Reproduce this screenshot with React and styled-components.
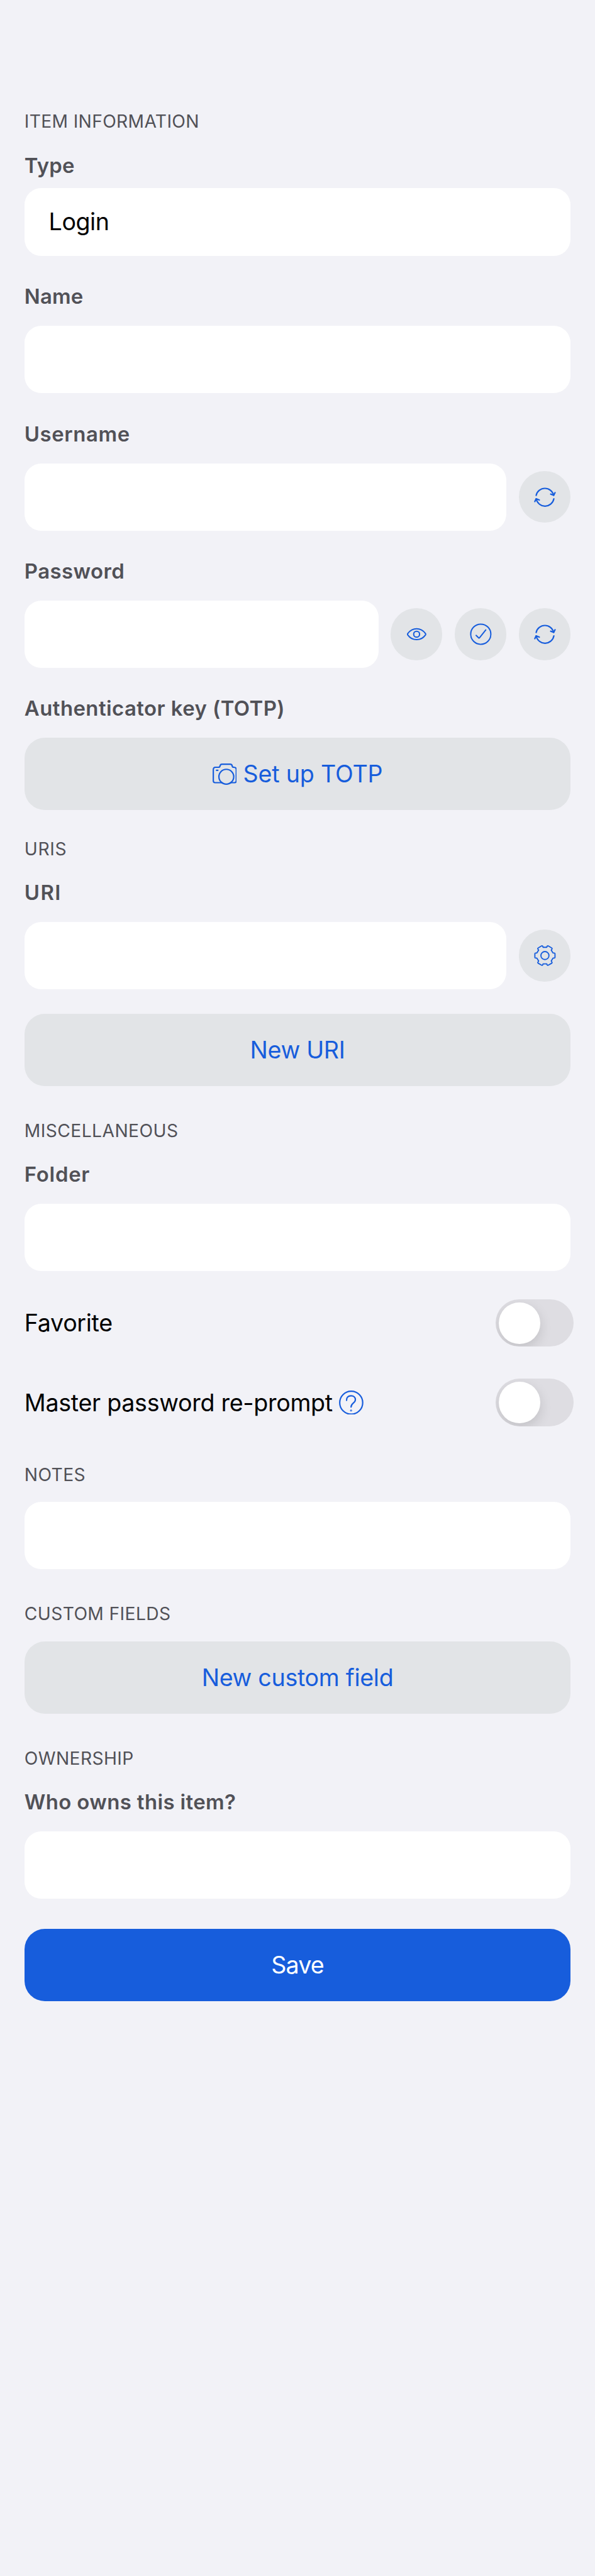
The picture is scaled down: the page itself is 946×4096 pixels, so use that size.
import React from "react";
import styled, { createGlobalStyle } from "styled-components";

const k = 946 / 1170;
const kv = 4096 / 5064;
// u scales widths and type, v scales vertical measures
const u = (n) => `${(n * k).toFixed(3)}px`;
const v = (n) => `${(n * kv).toFixed(3)}px`;

const Global = createGlobalStyle`
  body { margin: 0; background: #f2f2f7; font-family: Inter, "Liberation Sans", sans-serif; }
`;

const Page = styled.main`
  box-sizing: border-box;
  width: 100%;
  height: 4096px;
  padding: ${v(215.3)} ${u(48)} 0;
  display: flex;
  flex-direction: column;
`;

const Section = styled.section`
  display: flex;
  flex-direction: column;
  margin-top: ${(p) => v(p.$top ?? 0)};
`;

const SectionTitle = styled.h2`
  margin: 0;
  height: ${v(48)};
  line-height: ${v(48)};
  font-size: ${u(34.9)};
  font-weight: 400;
  letter-spacing: ${(p) => u(p.$track ?? 0.48)};
  color: #515157;
  white-space: nowrap;
`;

const Label = styled.label`
  display: block;
  height: ${v(60)};
  line-height: ${v(60)};
  margin-top: ${(p) => v(p.$top ?? 50)};
  margin-bottom: ${(p) => v(p.$bottom ?? 28)};
  font-size: ${u(40.7)};
  font-weight: 600;
  letter-spacing: ${(p) => u(p.$track ?? 0.55)};
  color: #515157;
  white-space: nowrap;
`;

const Row = styled.div`
  display: flex;
  align-items: center;
  gap: ${u(24)};
`;

const Field = styled.div`
  box-sizing: border-box;
  flex: 1 0 auto;
  height: ${(p) => v(p.$height ?? 132)};
  margin-top: ${(p) => v(p.$top ?? 0)};
  padding: 0 ${u(48)};
  border-radius: ${u(33)};
  background: #fff;
  color: #000;
  font-size: ${u(46.5)};
  line-height: ${(p) => v((p.$height ?? 132) + 1)};
  letter-spacing: ${u(-0.57)};
`;

const IconButton = styled.button`
  flex: none;
  display: flex;
  align-items: center;
  justify-content: center;
  width: ${u(102)};
  height: ${u(102)};
  padding: 0;
  border: 0;
  border-radius: 50%;
  background: #e2e4e7;
`;

const WideButton = styled.button`
  display: flex;
  align-items: center;
  justify-content: center;
  gap: ${u(12.5)};
  width: 100%;
  height: ${v(142)};
  margin-top: ${(p) => v(p.$top ?? 0)};
  padding: 0;
  border: 0;
  border-radius: ${u(40)};
  background: ${(p) => (p.$primary ? "#175ddc" : "#e2e4e7")};
  color: ${(p) => (p.$primary ? "#fff" : "#175ddc")};
  font-family: inherit;
  font-size: ${u(46.5)};
  letter-spacing: ${(p) => u(p.$track ?? -0.36)};
`;

const ToggleRow = styled.div`
  display: flex;
  align-items: center;
  height: ${v(93)};
  margin: ${(p) => v(p.$top)} ${u(-6)} 0 0;
`;

const ToggleText = styled.span`
  font-size: ${u(46.5)};
  letter-spacing: ${(p) => u(p.$track ?? -0.36)};
  margin-right: ${u(13)};
  white-space: nowrap;
`;

const Track = styled.span`
  box-sizing: border-box;
  overflow: hidden;
  width: ${u(153)};
  height: ${u(93)};
  margin-left: auto;
  padding: ${u(6)};
  border-radius: ${u(47)};
  background: #dedde2;
`;

const Knob = styled.span`
  display: block;
  width: ${u(81)};
  height: ${u(81)};
  border-radius: 50%;
  background: #fff;
  box-shadow: 0 ${u(9)} ${u(24)} rgba(0, 0, 0, 0.13);
`;

const Icon = styled.svg.attrs((p) => ({
  viewBox: `0 0 ${p.$w} ${p.$h}`,
  fill: "none",
  stroke: "#175ddc",
  strokeWidth: p.$stroke ?? 2.5,
  strokeLinecap: "round",
  strokeLinejoin: "round",
}))`
  flex: none;
  width: ${(p) => u(p.$w)};
  height: ${(p) => u(p.$h)};
`;

const Refresh = () => (
  <Icon $w={48} $h={48} $stroke={2.7}>
    <path d="M6.7 20.6A17.7 17.7 0 0 1 41.2 20.4M41.6 27.3A17.7 17.7 0 0 1 6.8 27.4" />
    <path d="M35.3 18.1 41.3 20.5 43.9 15.2M4.1 32.8 6.7 27.3 12.9 29.7" />
  </Icon>
);

const Eye = () => (
  <Icon $w={48} $h={48}>
    <path d="M6.8 22.3C16 10.2 32 10.2 41.2 22.3Q42.5 24 41.2 25.7C32 37.8 16 37.8 6.8 25.7Q5.5 24 6.8 22.3Z" />
    <circle cx="24" cy="24" r="5.8" />
  </Icon>
);

const Check = () => (
  <Icon $w={48} $h={48}>
    <circle cx="24" cy="24" r="19.8" />
    <path d="M14.8 26.4 19.8 31.3Q20.7 32.1 21.5 31.1L33.8 15.7" />
  </Icon>
);

const Gear = () => (
  <Icon $w={48} $h={48} $stroke={2.3}>
    <circle cx="24" cy="24" r="7.9" />
    <path d="M20.4 7.7Q19.6 4.1 17.6 5L11.3 8.6Q9.2 9.7 10.3 11.3L11.6 13.3 8.1 19H5.7Q4.2 19 4.2 20.5V27.5Q4.2 29 5.7 29H8.1L11.6 34.7 10.3 36.7Q9.2 38.3 11.3 39.4L17.6 43Q19.6 43.9 20.4 40.3H27.6Q28.4 43.9 30.4 43L36.7 39.4Q38.8 38.3 37.7 36.7L36.4 34.7 39.9 29H42.3Q43.8 29 43.8 27.5V20.5Q43.8 19 42.3 19H39.9L36.4 13.3 37.7 11.3Q38.8 9.7 36.7 8.6L30.4 5Q28.4 4.1 27.6 7.7Z" />
  </Icon>
);

const Camera = () => (
  <Icon $w={48} $h={42} $stroke={2.7}>
    <path d="M18.3 37.7H5Q1.4 37.7 1.4 34V12Q1.4 7.4 5.8 7.4H11Q14.3 7.4 14.6 5Q15 1.4 18.6 1.4H34.6Q38.2 1.4 38.6 5Q38.8 7.4 42 7.4Q46.6 7.4 46.6 12V34Q46.6 37.7 43 37.7H35.7" />
    <circle cx="27" cy="26" r="14.6" />
    <path d="M7.6 13.4H10.4" />
  </Icon>
);

const Question = () => (
  <Icon $w={48} $h={48} $stroke={2.7}>
    <circle cx="24" cy="24" r="22.6" />
    <path d="M14.9 19.3C14.4 13.5 18.2 10.3 23.6 10.3C28.8 10.3 32.2 13.6 32.2 18C32.2 25.2 23.7 24.2 23.7 32.6" />
    <circle cx="23.7" cy="39.3" r="0.6" />
  </Icon>
);

export default function App() {
  return (
    <>
      <Global />
      <Page>
        <Section>
          <SectionTitle $track={0.43}>ITEM INFORMATION</SectionTitle>
          <Label $top={31.9} $bottom={14.8} $track={0.24}>Type</Label>
          <Field $height={133}>Login</Field>
          <Label $track={0.24}>Name</Label>
          <Field />
          <Label $track={0.75}>Username</Label>
          <Row>
            <Field />
            <IconButton><Refresh /></IconButton>
          </Row>
          <Label>Password</Label>
          <Row>
            <Field />
            <IconButton><Eye /></IconButton>
            <IconButton><Check /></IconButton>
            <IconButton><Refresh /></IconButton>
          </Row>
          <Label>Authenticator key (TOTP)</Label>
          <WideButton $track={-0.19}><Camera />Set up TOTP</WideButton>
        </Section>
        <Section $top={53}>
          <SectionTitle $track={0.87}>URIS</SectionTitle>
          <Label $top={31} $track={1.8}>URI</Label>
          <Row>
            <Field />
            <IconButton><Gear /></IconButton>
          </Row>
          <WideButton $top={48}>New URI</WideButton>
        </Section>
        <Section $top={65}>
          <SectionTitle $track={0.55}>MISCELLANEOUS</SectionTitle>
          <Label $top={31} $track={0.9}>Folder</Label>
          <Field />
          <ToggleRow $top={56}>
            <ToggleText>Favorite</ToggleText>
            <Track><Knob /></Track>
          </ToggleRow>
          <ToggleRow $top={63}>
            <ToggleText>Master password re-prompt</ToggleText>
            <Question />
            <Track><Knob /></Track>
          </ToggleRow>
        </Section>
        <Section $top={72}>
          <SectionTitle>NOTES</SectionTitle>
          <Field $top={29} />
        </Section>
        <Section $top={65}>
          <SectionTitle>CUSTOM FIELDS</SectionTitle>
          <WideButton $top={29}>New custom field</WideButton>
        </Section>
        <Section $top={65}>
          <SectionTitle>OWNERSHIP</SectionTitle>
          <Label $top={31} $track={0.47}>Who owns this item?</Label>
          <Field />
        </Section>
        <WideButton $top={60} $primary $track={-1}>Save</WideButton>
      </Page>
    </>
  );
}
